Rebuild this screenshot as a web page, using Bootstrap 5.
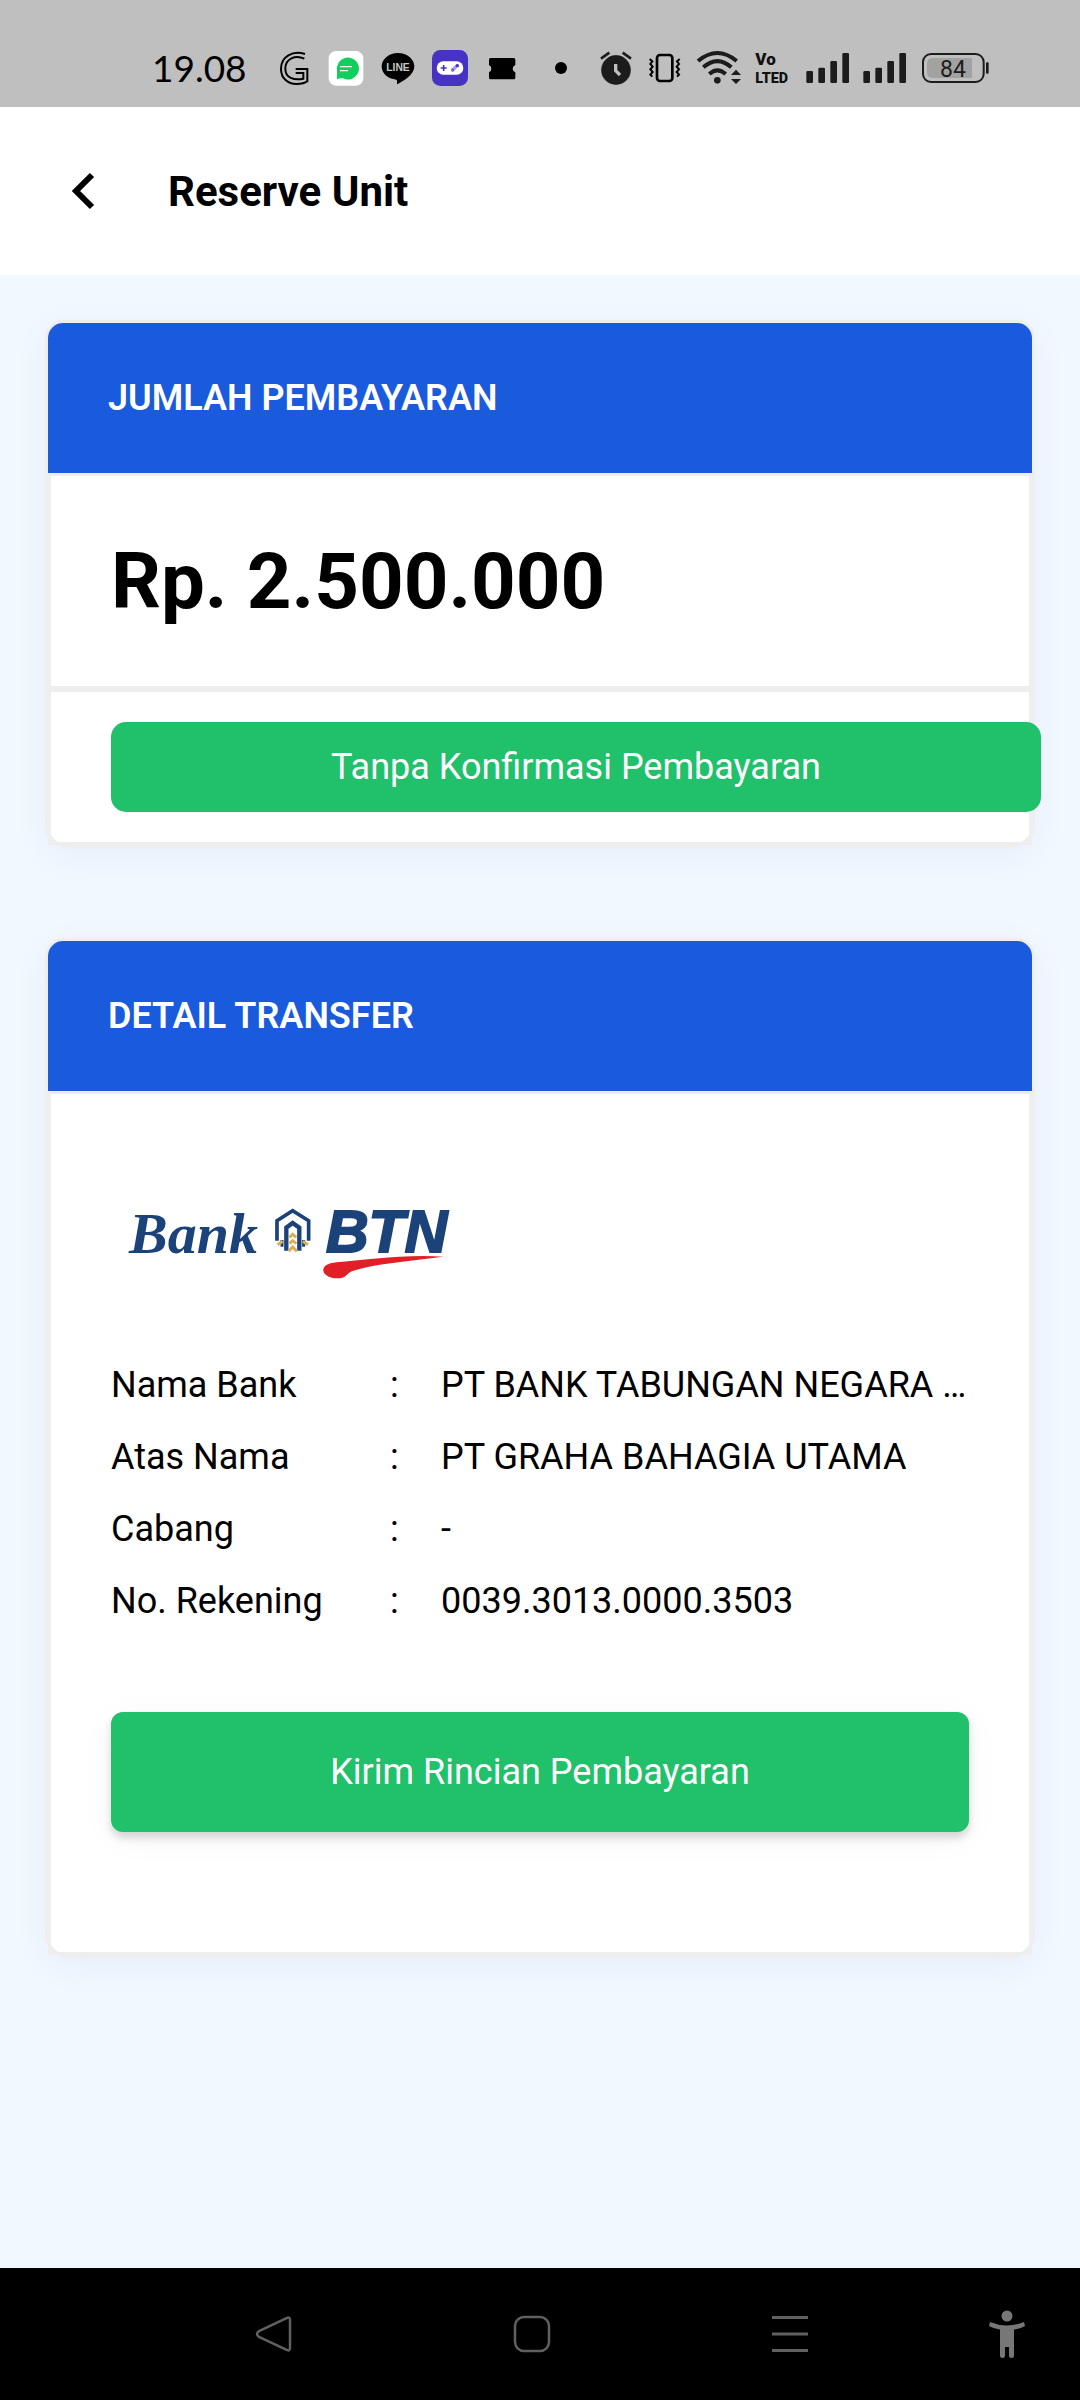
<!DOCTYPE html>
<html lang="id">
<head>
<meta charset="utf-8">
<meta name="viewport" content="width=device-width, initial-scale=1">
<title>Reserve Unit</title>
<link href="https://cdn.jsdelivr.net/npm/bootstrap@5.3.0/dist/css/bootstrap.min.css" rel="stylesheet">
<style>
  body { font-family: Roboto, "Noto Sans", sans-serif; font-size: 36px; line-height: 42px; color: #000; background: #f1f8ff; }
  svg { display: block; flex: none; overflow: visible; }
  .status-bar { background: #bfbfbf; height: 107px; padding: 29px 90px 0 152px; }
  .status-time { font-family: Lato, sans-serif; font-size: 37px; width: 124px; }
  .status-icons { gap: 16px; }
  .app-bar { background: #fff; height: 168px; padding: 2px 48px 0; }
  .back-btn { width: 72px; height: 72px; color: #000; }
  .app-title { font-size: 42px; line-height: 50px; font-weight: 700; margin-left: 48px; }
  .content-area { padding: 45px 45px 90px; gap: 90px; }
  .pay-card { border: 3px solid #eee; border-radius: 18px 18px 24px 24px; background: #fff; box-shadow: 0 9px 36px rgba(60, 60, 140, .05); }
  .pay-head { background: #1a5adc; color: #fff; padding: 54px 60px; border-radius: 15px 15px 0 0; }
  .pay-head h2 { font-size: 36px; line-height: 42px; font-weight: 600; }
  .pay-box { border: 3px solid #eee; padding: 60px; }
  .pay-box.first-box { border-top-color: #e8eef7; }
  .pay-box.action-box { padding: 30px 60px; }
  .amount { font-size: 78px; line-height: 92px; margin-bottom: -2px; font-weight: 700; }
  .btn-pay { --bs-btn-color: #fff; --bs-btn-bg: #21c06b; --bs-btn-hover-color: #fff; --bs-btn-hover-bg: #1dad60; --bs-btn-border-width: 0; --bs-btn-font-size: 36px; --bs-btn-line-height: 42px; --bs-btn-padding-y: 24px; --bs-btn-border-radius: 15px; }
  .btn-wide { width: calc(100% + 72px); }
  .btn-send { --bs-btn-padding-y: 39px; --bs-btn-border-radius: 12px; margin-top: 75px; margin-bottom: 60px; box-shadow: 0 6px 9px rgba(0, 0, 0, .15), 0 6px 36px rgba(0, 0, 0, .04); }
  .bank-logo { margin-bottom: 15px; }
  .detail-table { table-layout: fixed; }
  .detail-table th, .detail-table td { padding: 15px 0; font-weight: 400; }
  .col-label { width: 279px; }
  .col-colon { width: 51px; }
  .nav-bar { background: #000; height: 132px; padding: 0 49px 0 145px; color: #606060; }
  .nav-key { color: inherit; width: 48px; height: 48px; }
  .access-key { color: #777; margin-left: 64px; }
</style>
</head>
<body class="d-flex flex-column min-vh-100">

<div class="status-bar d-flex align-items-center">
  <span class="status-time">19.08</span>
  <div class="status-icons d-flex align-items-center">
    <svg width="36" height="36" viewBox="438 60 108 108" fill="none" stroke="#000" stroke-width="6"><path d="M525 72C488 60 453 80 453 116C453 146 474 162 499 162C514 162 526 159 532 154V117H497"/><path d="M523 86C496 74 466 86 466 116C466 144 492 152 520 146V129H497"/></svg>
    <svg width="36" height="36" viewBox="594 60 108 108"><rect x="596" y="63" width="104" height="104" rx="22" fill="#fff"/><path d="M621 147V117A33 33 0 1 1 637 144Z" fill="#10cf5e"/><path d="M630 110H666M630 122H654" stroke="#fff" stroke-width="4"/></svg>
    <svg width="36" height="36" viewBox="750 60 108 108"><path d="M804 69C831 69 853 87 853 109C853 134 822 152 802 163C799 161 804 153 799 149C774 147 755 131 755 109C755 87 777 69 804 69Z"/><text x="804" y="122" text-anchor="middle" font-family="Liberation Sans, sans-serif" font-weight="700" font-size="31" fill="#c8c8c8">LINE</text></svg>
    <svg width="36" height="36" viewBox="906 60 108 108"><rect x="906" y="60" width="108" height="108" rx="25" fill="#4733c3"/><rect x="920" y="94" width="80" height="40" rx="20" fill="#fff"/><path d="M932 114H950M941 105V123" stroke="#4733c3" stroke-width="5"/><path d="M969 119L981 107" stroke="#a99be8" stroke-width="10" stroke-linecap="round"/><circle cx="982" cy="107" r="5" fill="#4733c3"/><circle cx="968" cy="120" r="5" fill="#7465d6"/></svg>
    <svg width="36" height="36" viewBox="1062 60 108 108"><path d="M1081 84H1151Q1156 84 1156 89V105Q1148 108 1148 116Q1148 123 1156 127V143Q1156 148 1151 148H1081Q1077 148 1077 143V127Q1084 123 1084 116Q1084 108 1077 105V89Q1077 84 1081 84Z"/></svg>
  </div>
  <div class="status-icons d-flex align-items-center ms-auto">
    <svg width="28" height="36" viewBox="108 60 84 108"><circle cx="123" cy="114" r="18"/></svg>
    <svg width="32" height="36" viewBox="240 60 96 108" fill="#1c1c1c" stroke="#1c1c1c"><circle cx="288" cy="120" r="44"/><path d="M243 86L268 68M333 86L308 68" stroke-width="8" fill="none"/><path d="M287 102V122L300 135" stroke="#bfbfbf" stroke-width="10" fill="none"/></svg>
    <svg width="32" height="36" viewBox="384 60 96 108" fill="none" stroke="#000" stroke-width="7"><rect x="411" y="75" width="46" height="78" rx="9" stroke-width="8"/><path d="M389 87L397 94L391 102L398 110L391 118L398 126L391 134L397 140M479 87L471 94L477 102L470 110L477 118L470 126L477 134L471 140" stroke-width="6"/></svg>
    <svg width="44" height="36" viewBox="528 60 132 108" fill="none" stroke="#1c1c1c" stroke-width="12"><path d="M534 93Q592 45 650 93M550 112Q592 75 634 112M568 132Q592 110 617 132"/><circle cx="592" cy="151" r="10" fill="#1c1c1c" stroke="none"/><path d="M633 135L648 119L663 135ZM633 147H663L648 162Z" fill="#1c1c1c" stroke="none"/></svg>
    <svg width="34" height="36" viewBox="708 60 102 108" fill="#111" font-family="Roboto, sans-serif" font-weight="900"><text x="706" y="106" font-size="51">Vo</text><text x="706" y="158" font-size="43">LTED</text></svg>
    <svg width="42" height="36" viewBox="858 60 126 108" fill="#1c1c1c"><rect x="859" y="123" width="20" height="36" rx="4"/><rect x="895" y="113" width="20" height="46" rx="4"/><rect x="931" y="93" width="20" height="66" rx="4"/><rect x="967" y="69" width="20" height="90" rx="4"/></svg>
    <svg width="42" height="36" viewBox="1032 60 126 108" fill="#1c1c1c"><rect x="1030" y="123" width="20" height="36" rx="4"/><rect x="1066" y="113" width="20" height="46" rx="4"/><rect x="1102" y="93" width="20" height="66" rx="4"/><rect x="1138" y="69" width="20" height="90" rx="4"/></svg>
    <svg width="68" height="36" viewBox="1206 60 204 108"><rect x="1209" y="72" width="182" height="84" rx="24" fill="none" stroke="#1c1c1c" stroke-width="6"/><path d="M1238 84H1356V144H1238Q1221 144 1221 127V101Q1221 84 1238 84Z" fill="#a2a2a2"/><rect x="1398" y="97" width="8" height="34" rx="3" fill="#1c1c1c"/><text x="1299" y="140" text-anchor="middle" font-family="Roboto, sans-serif" font-size="69" fill="#1c1c1c">84</text></svg>
  </div>
</div>

<header class="app-bar d-flex align-items-center">
  <button type="button" class="back-btn btn p-0 border-0" aria-label="Kembali">
    <svg width="72" height="72" viewBox="0 0 72 72" fill="none" stroke="#000" stroke-width="6"><path d="M44 19L28 35L44 51"/></svg>
  </button>
  <h1 class="app-title mb-0">Reserve Unit</h1>
</header>

<main class="content-area d-flex flex-column flex-grow-1">
  <section class="pay-card">
    <div class="pay-head"><h2 class="mb-0">JUMLAH PEMBAYARAN</h2></div>
    <div class="pay-box first-box"><p class="amount">Rp. 2.500.000</p></div>
    <div class="pay-box action-box">
      <button type="button" class="btn btn-pay btn-wide d-block">Tanpa Konfirmasi Pembayaran</button>
    </div>
  </section>

  <section class="pay-card">
    <div class="pay-head"><h2 class="mb-0">DETAIL TRANSFER</h2></div>
    <div class="pay-box first-box">
      <svg class="bank-logo" width="360" height="180" viewBox="0 0 360 180" role="img" aria-label="Bank BTN">
        <text x="18" y="99" font-family="Liberation Serif, serif" font-style="italic" font-weight="700" font-size="58" fill="#1b4379">Bank</text>
        <g transform="translate(-11 26) scale(.3333)" fill="none" stroke="#1b4379" stroke-width="11">
          <path d="M531 182V122L578 92L626 122V182"/>
          <path d="M559 212V143L578 129L598 143V212" stroke-width="13"/>
          <path d="M546 180V200M611 180V200" stroke-width="9"/>
          <path d="M568 172L578 163L589 172M568 191L578 182L589 191M566 214L578 201L591 214M533 194L548 184M624 194L609 184" stroke="#dcae58" stroke-width="9"/>
          <path d="M1030 230C920 222 790 240 710 247C680 250 669 260 670 272C673 290 702 298 724 294C740 290 742 278 760 272C830 250 930 243 1030 230Z" fill="#e21f26" stroke="none"/>
        </g>
        <text x="215" y="98" font-family="Liberation Sans, sans-serif" font-style="italic" font-weight="700" font-size="59" fill="#1b4379" stroke="#1b4379" stroke-width="2">BTN</text>
      </svg>
      <table class="detail-table w-100">
        <colgroup><col class="col-label"><col class="col-colon"><col></colgroup>
        <tbody>
          <tr><th scope="row">Nama Bank</th><td>:</td><td class="text-nowrap">PT BANK TABUNGAN NEGARA …</td></tr>
          <tr><th scope="row">Atas Nama</th><td>:</td><td>PT GRAHA BAHAGIA UTAMA</td></tr>
          <tr><th scope="row">Cabang</th><td>:</td><td>-</td></tr>
          <tr><th scope="row">No. Rekening</th><td>:</td><td>0039.3013.0000.3503</td></tr>
        </tbody>
      </table>
      <button type="button" class="btn btn-pay btn-send d-block w-100">Kirim Rincian Pembayaran</button>
    </div>
  </section>
</main>

<nav class="nav-bar d-flex align-items-center" aria-label="Navigasi sistem">
  <div class="d-flex flex-fill">
    <div class="col d-flex justify-content-center">
      <button type="button" class="nav-key btn p-0 border-0" aria-label="Kembali"><svg width="48" height="48" viewBox="0 0 48 48" fill="none" stroke="currentColor" stroke-width="2.5"><path d="M36 8.500Q40 6 40 10V38Q40 42 36 39.500L9 27Q5 24 9 21Z"/></svg></button>
    </div>
    <div class="col d-flex justify-content-center">
      <button type="button" class="nav-key btn p-0 border-0" aria-label="Beranda"><svg width="48" height="48" viewBox="0 0 48 48" fill="none" stroke="currentColor" stroke-width="2.5"><rect x="7" y="7" width="34" height="34" rx="9"/></svg></button>
    </div>
    <div class="col d-flex justify-content-center">
      <button type="button" class="nav-key btn p-0 border-0" aria-label="Aplikasi terbaru"><svg width="48" height="48" viewBox="0 0 48 48" fill="none" stroke="currentColor" stroke-width="3"><path d="M6 7.500H42M6 24H42M6 40.500H42"/></svg></button>
    </div>
  </div>
  <button type="button" class="nav-key access-key btn p-0 border-0" aria-label="Aksesibilitas"><svg width="48" height="48" viewBox="0 0 48 48" fill="currentColor"><circle cx="24" cy="6" r="5.500"/><path d="M7 12Q24 19 41 12L42 16Q37 19 31 19.500V46Q31 48 28.500 48Q26 48 26 46V37H22V46Q22 48 19.500 48Q17 48 17 46V19.500Q11 19 6 16Z"/></svg></button>
</nav>

<script src="https://cdn.jsdelivr.net/npm/bootstrap@5.3.0/dist/js/bootstrap.bundle.min.js"></script>
</body>
</html>
